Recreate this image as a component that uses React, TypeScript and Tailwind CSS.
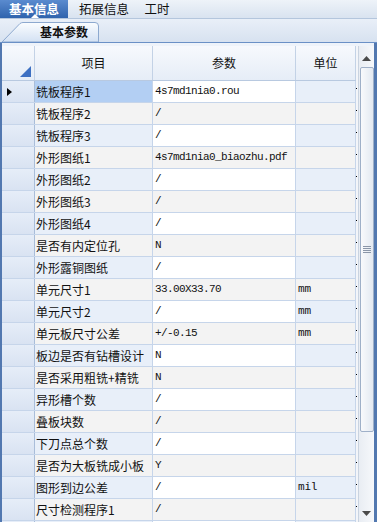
import React from "react";

const rows: [string, string, string][] = [
  ["铣板程序1", "4s7md1nia0.rou", ""],
  ["铣板程序2", "/", ""],
  ["铣板程序3", "/", ""],
  ["外形图纸1", "4s7md1nia0_biaozhu.pdf", ""],
  ["外形图纸2", "/", ""],
  ["外形图纸3", "/", ""],
  ["外形图纸4", "/", ""],
  ["是否有内定位孔", "N", ""],
  ["外形露铜图纸", "/", ""],
  ["单元尺寸1", "33.00X33.70", "mm"],
  ["单元尺寸2", "/", "mm"],
  ["单元板尺寸公差", "+/-0.15", "mm"],
  ["板边是否有钻槽设计", "N", ""],
  ["是否采用粗铣+精铣", "N", ""],
  ["异形槽个数", "/", ""],
  ["叠板块数", "/", ""],
  ["下刀点总个数", "/", ""],
  ["是否为大板铣成小板", "Y", ""],
  ["图形到边公差", "/", "mil"],
  ["尺寸检测程序1", "/", ""],
  ["", "", ""],
];

const cjk = { fontFamily: '"Noto Sans CJK SC", "Noto Sans", sans-serif' };
const mono = { fontFamily: '"Liberation Mono", "Noto Sans CJK SC", monospace' };
const dmono = { fontFamily: '"DejaVu Sans Mono", monospace' };

export default function App() {
  return (
    <div className="w-[377px] h-[522px] overflow-hidden bg-[#dfe8f4] flex flex-col" style={cjk}>
      {/* top tabs */}
      <div className="h-[19px] flex items-stretch bg-gradient-to-b from-[#eef3f9] to-[#d9e3f0] border-b border-[#b4c6dd] shrink-0">
        <div className="relative w-[68px] bg-gradient-to-b from-[#5a8bcf] to-[#2f63ad] flex items-center justify-center">
          <span className="text-white font-bold text-[12.5px] leading-[18px]">基本信息</span>
          <div className="absolute bottom-0 left-[31px] w-0 h-0 border-l-[4px] border-r-[4px] border-b-[4px] border-l-transparent border-r-transparent border-b-white" />
        </div>
        <div className="w-[70px] flex items-center justify-center">
          <span className="text-[#111] text-[12.5px] leading-[18px] ml-[2px]">拓展信息</span>
        </div>
        <div className="w-[38px] flex items-center justify-center">
          <span className="text-[#111] text-[12.5px] leading-[18px]">工时</span>
        </div>
      </div>
      {/* sub tab */}
      <div className="h-[23px] shrink-0 bg-gradient-to-b from-[#e9eff8] to-[#d7e2f0] flex items-end">
        <div className="relative w-[101px] h-[20px] flex items-center justify-end pr-[13px]">
          <svg className="absolute inset-0" width="101" height="20" viewBox="0 0 101 20">
            <defs>
              <linearGradient id="tg" x1="0" y1="0" x2="0" y2="1">
                <stop offset="0" stopColor="#fbfdff" />
                <stop offset="1" stopColor="#d3e1f3" />
              </linearGradient>
            </defs>
            <path d="M2 20 L20 1.5 Q21.5 0.5 23 0.5 L95 0.5 Q98.5 0.5 98.5 4 L98.5 20 Z" fill="url(#tg)" stroke="#8da9cf" strokeWidth="1" />
          </svg>
          <span className="relative text-[12px] font-bold text-[#111] leading-[14px]">基本参数</span>
        </div>
      </div>
      {/* grid */}
      <div className="flex-1 flex flex-col border-t border-[#6a90c6] bg-[#eef3fa] min-h-0">
        <div className="flex-1 flex border-l-[2px] border-r-[3px] border-[#5278b0] pt-[3px] min-h-0">
          <div className="w-[354px] flex flex-col min-h-0 overflow-hidden bg-white">
            {/* header */}
            <div className="h-[35px] shrink-0 flex border-b border-[#b8c9e0] bg-gradient-to-b from-[#f7f9fd] to-[#e6edf7] text-[12px] text-[#111]">
              <div className="relative w-[33px] border-r border-[#c3d2e6]">
                <svg className="absolute right-[3px] bottom-[3px]" width="11" height="11" viewBox="0 0 11 11">
                  <polygon points="11,0 11,11 0,11" fill="#3d70c2" />
                </svg>
              </div>
              <div className="w-[118px] border-r border-[#c3d2e6] flex items-center justify-center">项目</div>
              <div className="w-[143px] border-r border-[#c3d2e6] flex items-center justify-center">参数</div>
              <div className="w-[60px] border-r border-[#c3d2e6] flex items-center justify-center">单位</div>
            </div>
            {rows.map((r, i) => {
              const odd = i % 2 === 0;
              const itemBg = i === 0 ? "bg-[#b3cff3]" : odd ? "bg-[#e8eff9]" : "bg-[#f3f3f3]";
              const paramBg = odd ? "bg-white" : "bg-[#f3f3f3]";
              const unitBg = odd ? "bg-[#e8eff9]" : "bg-[#f3f3f3]";
              return (
                <div key={i} className="h-[22px] shrink-0 flex border-b border-[#c6d5ea] text-[12px] text-[#111]">
                  <div className="relative w-[33px] bg-gradient-to-b from-[#e6edf8] to-[#d9e3f2] border-r border-[#a9bdd9] flex items-center">
                    {i === 0 && (
                      <svg className="ml-[5px]" width="5" height="8" viewBox="0 0 5 8">
                        <polygon points="0,0 5,4 0,8" fill="#000" />
                      </svg>
                    )}
                  </div>
                  <div className={`w-[118px] ${itemBg} border-r border-[#c6d5ea] flex items-center pl-[1px] whitespace-nowrap overflow-hidden leading-[14px]`}>{r[0]}</div>
                  <div className={`w-[143px] ${paramBg} border-r border-[#c6d5ea] flex items-center pl-[2px] whitespace-nowrap overflow-hidden text-[11px] tracking-[-0.6px]`} style={mono}>{r[1]}</div>
                  <div className={`w-[60px] ${unitBg} border-r border-[#c6d5ea] flex items-center pl-[2px] text-[11px]`} style={dmono}>{r[2]}</div>
                </div>
              );
            })}
          </div>
          {/* dotted strip */}
          <div className="w-[2px] flex flex-col bg-[#f3f5f9] pt-[35px] overflow-hidden">
            {rows.map((_, i) => (
              <div key={i} className="h-[22px] shrink-0 relative">
                <div className="absolute top-[7px] left-[0px] w-[1px] h-[1px] bg-black" />
              </div>
            ))}
          </div>
          {/* scrollbar */}
          <div className="w-[16px] flex flex-col items-center bg-gradient-to-r from-[#e9edf3] to-[#f6f8fb] border-l border-[#c9d3e0]">
            <div className="h-[19px] shrink-0 flex items-center justify-center pt-[5px]">
              <svg width="9" height="5" viewBox="0 0 9 5"><polygon points="4.5,0 9,5 0,5" fill="#4a4a4a" /></svg>
            </div>
            <div className="mt-[2px] w-[14px] h-[365px] shrink-0 rounded-[2px] border border-[#9fb0c8] bg-gradient-to-r from-[#f9fafc] to-[#e3e9f1] flex items-center justify-center">
              <div className="flex flex-col gap-[1px]">
                <div className="w-[8px] h-[1px] bg-[#8a96a8]" />
                <div className="w-[8px] h-[1px] bg-[#8a96a8]" />
                <div className="w-[8px] h-[1px] bg-[#8a96a8]" />
                <div className="w-[8px] h-[1px] bg-[#8a96a8]" />
              </div>
            </div>
            <div className="flex-1" />
            <div className="h-[14px] shrink-0 flex items-center justify-center pb-[4px]">
              <svg width="9" height="5" viewBox="0 0 9 5"><polygon points="0,0 9,0 4.5,5" fill="#4a4a4a" /></svg>
            </div>
          </div>
        </div>
      </div>
    </div>
  );
}
